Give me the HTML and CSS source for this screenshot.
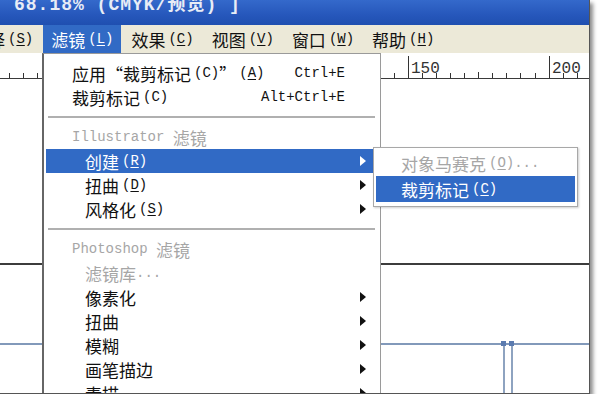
FILE: index.html
```html
<!DOCTYPE html>
<html>
	<head>
		<meta charset="utf-8">
		<link rel="stylesheet" href="styles.css">
	</head>
	<body>
		<div class="window">
			<div class="titlebar">
				<span class="title">68.18% (CMYK/预览) ]</span>
			</div>

			<div class="menubar">
				<div class="menu-item">选择<span class="key">(<u>S</u>)</span></div>
				<div class="menu-item active">滤镜<span class="key">(<u>L</u>)</span></div>
				<div class="menu-item">效果<span class="key">(<u>C</u>)</span></div>
				<div class="menu-item">视图<span class="key">(<u>V</u>)</span></div>
				<div class="menu-item">窗口<span class="key">(<u>W</u>)</span></div>
				<div class="menu-item">帮助<span class="key">(<u>H</u>)</span></div>
			</div>

			<div class="workspace">
				<svg class="ruler" width="589" height="26" viewBox="0 0 589 26">
					<line x1="0" y1="25.5" x2="589" y2="25.5" stroke="#3a3a3a"/>
					<path d="M9.5 20v5M23.5 20v5M37.5 20v5M394.5 20v5M422.5 20v5M436.5 20v5M450.5 20v5M464.5 20v5M478.5 19v6M492.5 20v5M506.5 20v5M520.5 20v5M535.5 20v5M563.5 20v5M577.5 20v5" stroke="#333"/>
					<path d="M408.5 3v22M549.5 3v22" stroke="#333"/>
					<text class="ruler-label" x="411" y="20">150</text>
					<text class="ruler-label" x="552" y="20">200</text>
				</svg>

				<div class="canvas">
					<div class="shape edge"></div>
					<div class="shape guide"></div>
					<div class="shape stem stem-a"></div>
					<div class="shape stem stem-b"></div>
					<div class="shape handle handle-a"></div>
					<div class="shape handle handle-b"></div>
				</div>

				<div class="dropdown">
					<div class="row">应用<span class="q open">“</span>裁剪标记<span class="key">(C)</span><span class="q close">”</span><span class="key">(<u>A</u>)</span><span class="shortcut">Ctrl+E</span></div>
					<div class="row">裁剪标记<span class="key">(C)</span><span class="shortcut">Alt+Ctrl+E</span></div>
					<div class="sep"></div>
					<div class="row disabled"><span class="en">Illustrator&nbsp;</span>滤镜</div>
					<div class="row sub arrow active">创建<span class="key">(<u>R</u>)</span>
						<div class="submenu">
							<div class="row disabled">对象马赛克<span class="key">(<u>O</u>)...</span></div>
							<div class="row active">裁剪标记<span class="key">(<u>C</u>)</span></div>
						</div>
					</div>
					<div class="row sub arrow">扭曲<span class="key">(<u>D</u>)</span></div>
					<div class="row sub arrow">风格化<span class="key">(<u>S</u>)</span></div>
					<div class="sep"></div>
					<div class="row disabled"><span class="en">Photoshop&nbsp;</span>滤镜</div>
					<div class="row sub disabled">滤镜库<span class="en">...</span></div>
					<div class="row sub arrow">像素化</div>
					<div class="row sub arrow">扭曲</div>
					<div class="row sub arrow">模糊</div>
					<div class="row sub arrow">画笔描边</div>
					<div class="row sub arrow">素描</div>
				</div>
			</div>
		</div>
	</body>
</html>
```

FILE: styles.css
```css
body {
	margin: 0;
	background: #fff;
}

.window {
	width: 590px;
	height: 394px;
	box-sizing: border-box;
	border-right: 1px solid #555;
	border-bottom: 1px solid #555;
	box-shadow: 3px 3px 4px rgba(0, 0, 0, 0.45);
	display: flex;
	flex-direction: column;
	overflow: hidden;
	font-family: "Noto Sans CJK SC", sans-serif;
	color: #111;
}

.titlebar {
	flex: none;
	height: 25px;
	padding-left: 14px;
	background: linear-gradient(#3469cb, #2657bb 60%, #1f4fb0);
	overflow: hidden;
}

.title {
	display: block;
	margin-top: -4px;
	font: bold 18px/18px "Liberation Mono", "Noto Sans CJK SC", monospace;
	letter-spacing: 1px;
	color: #e8edf6;
	white-space: pre;
}

.menubar {
	flex: none;
	height: 28px;
	display: flex;
	gap: 2px;
	background: #ece9d8;
}

.menu-item {
	display: flex;
	align-items: center;
	padding: 0 8px;
	font-size: 17px;
	white-space: nowrap;
}

.menu-item:first-child {
	margin-left: -37px;
}

.menu-item.active {
	background: #316ac5;
	color: #fff;
}

.key,
.en,
.shortcut {
	font: 14px "Liberation Mono", monospace;
}

.key {
	margin-left: 3px;
}

/* full-width quote marks */
.q {
	display: inline-block;
	width: 17px;
}

.q.open {
	text-align: right;
}

.q.close {
	text-align: left;
}

u {
	text-decoration-thickness: 1px;
	text-underline-offset: 2px;
}

.workspace {
	position: relative;
	flex: 1;
	display: flex;
	flex-direction: column;
	background: #fff;
}

.ruler {
	display: block;
	flex: none;
}

.ruler-label {
	font: 16px "Liberation Mono", monospace;
	fill: #333;
}

.canvas {
	position: relative;
	flex: 1;
}

/* drawing objects on the artboard */
.shape {
	position: absolute;
}

.edge {
	left: 0;
	right: 0;
	top: 184px;
	height: 2px;
	background: #3c3c3c;
}

.guide {
	left: 0;
	right: 0;
	top: 264px;
	height: 2px;
	background: #8299ba;
}

.stem {
	top: 264px;
	bottom: 0;
	width: 2px;
	background: #8ea3c0;
}

.stem-a {
	left: 503px;
}

.stem-b {
	left: 511px;
}

.handle {
	top: 262px;
	width: 5px;
	height: 5px;
	background: #5b7bb0;
}

.handle-a {
	left: 501px;
}

.handle-b {
	left: 509px;
}

.dropdown {
	position: absolute;
	top: 0;
	left: 42px;
	width: 339px;
	box-sizing: border-box;
	padding: 7px 7px 0 2px;
	border: 1px solid #9a9a9a;
	border-left: 2px solid #666;
	border-bottom: none;
	background: #fff;
}

.row {
	position: relative;
	height: 24px;
	display: flex;
	align-items: center;
	padding: 0 28px 0 26px;
	font-size: 17px;
	white-space: nowrap;
}

.row.sub {
	padding-left: 39px;
}

.row.disabled {
	color: #a6a6a6;
}

.row.active {
	background: #316ac5;
	color: #fff;
}

.row.arrow::after {
	content: "";
	position: absolute;
	right: 7px;
	top: 7px;
	border-left: 6px solid currentColor;
	border-top: 5px solid transparent;
	border-bottom: 5px solid transparent;
}

.shortcut {
	margin-left: auto;
}

.sep {
	height: 2px;
	margin: 7px -2px 7px 2px;
	background: #b0b0b0;
}

.submenu {
	position: absolute;
	left: 100%;
	top: -2px;
	width: 205px;
	box-sizing: border-box;
	padding: 2px 2px 4px;
	border: 1px solid #a8a8a8;
	background: #fff;
	box-shadow: 1px 1px 2px rgba(0, 0, 0, 0.2);
	color: #111;
}

.submenu .row {
	height: 26px;
	padding-left: 25px;
}
```
